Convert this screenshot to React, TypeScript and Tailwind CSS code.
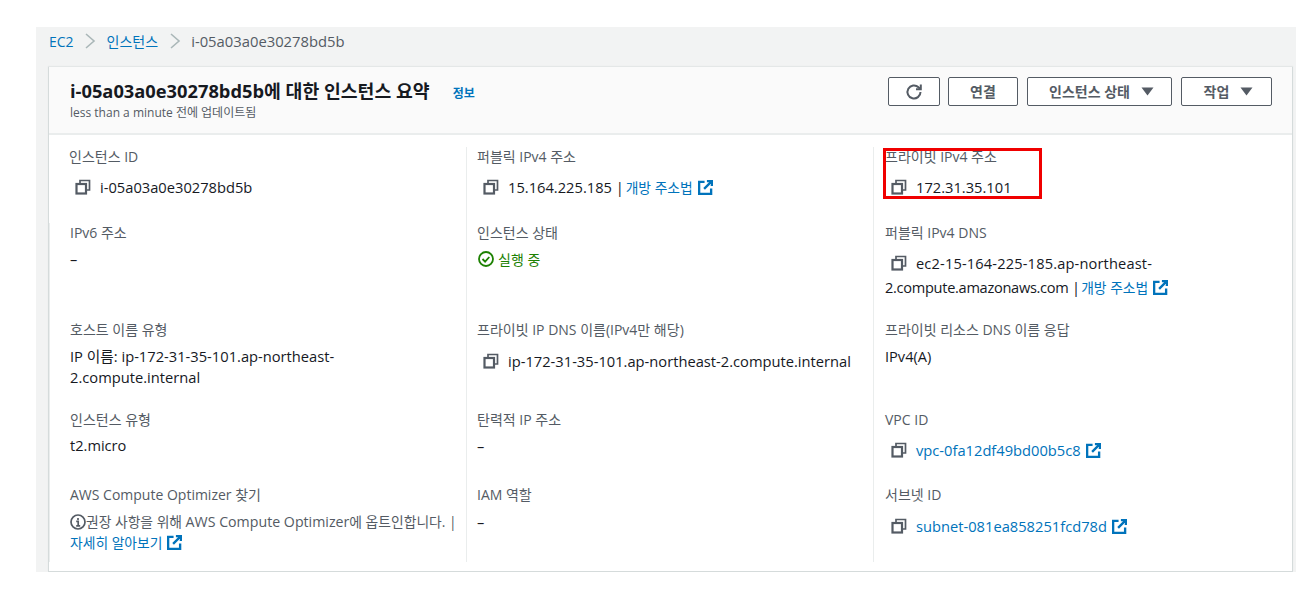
import React from "react";

const font = { fontFamily: '"Open Sans", "Noto Sans CJK KR", sans-serif' };

function Copy({ className = "" }: { className?: string }) {
  return (
    <svg width="16" height="16" viewBox="0 0 16 16" fill="none" stroke="#545b64" strokeWidth="2.2" className={`shrink-0 ${className}`}>
      <rect x="1.5" y="5" width="9.5" height="9.5" />
      <path d="M5 4.5V1.5h9.5V11h-3" strokeWidth="1.7" />
    </svg>
  );
}

function Ext() {
  return (
    <svg width="15" height="15" viewBox="0 0 16 16" fill="none" stroke="#0073bb" strokeWidth="2.5" className="inline-block ml-[5px] align-[-2px]">
      <path d="M7 2H1.2v12.8H14V9" />
      <path d="M9.5 1.2h5.3v5.3M14.5 1.5L6.5 9.5" />
    </svg>
  );
}

function Link({ children, ko = false }: { children: React.ReactNode; ko?: boolean }) {
  return <span className={`text-[#0073bb] ${ko ? "text-[13.8px] ml-[-2px]" : ""}`}>{children}<Ext /></span>;
}

function Cell({ label, children, pl }: { label: string; children: React.ReactNode; pl: string }) {
  return (
    <div className={`${pl} border-l border-[#eaeded] first:border-l-0`}>
      <div className="text-[14px] leading-[20px] text-[#545b64]">{label}</div>
      {children}
    </div>
  );
}

function Val({ children, mt = "mt-[10px]" }: { children: React.ReactNode; mt?: string }) {
  return <div className={`flex items-center gap-[9px] ${mt} h-[20px] text-[14.7px] text-[#16191f] whitespace-nowrap pl-[6px]`}>{children}</div>;
}

function Btn({ children, w }: { children: React.ReactNode; w: string }) {
  return (
    <button className={`${w} h-[29px] flex items-center justify-center gap-[11px] border border-[#545b64] rounded-[2px] bg-white text-[14px] font-semibold text-[#545b64]`}>
      {children}
    </button>
  );
}

function Caret() {
  return (
    <svg width="13" height="9" viewBox="0 0 13 9" fill="#545b64"><path d="M0.5 0.5h12L6.5 8.5z" /></svg>
  );
}

function Chevron() {
  return (
    <svg width="12" height="18" viewBox="0 0 12 18" fill="none" stroke="#aab7b8" strokeWidth="1.6" className="mx-[10.5px]"><path d="M2 2l8 7-8 7" /></svg>
  );
}

export default function App() {
  return (
    <div className="w-[1302px] h-[593px] bg-white pl-[36px] pr-[6px] pt-[27px] overflow-hidden" style={font}>
      <div className="h-[545px] bg-[#f2f3f3]">
        <div className="h-[28px] mb-[12px] pl-[13px] flex items-center text-[14px] text-[#545b64]">
          <span className="text-[#0073bb]">EC2</span>
          <Chevron />
          <span className="text-[#0073bb]">인스턴스</span>
          <Chevron />
          <span className="text-[14.8px]">i-05a03a0e30278bd5b</span>
        </div>
        <div className="ml-[12px] mr-[3px] h-[505px] bg-white border-l border-[#d5dbdb] border-r border-b shadow-[0_-1px_1px_#e4e7e7]">
          <div className="h-[68px] bg-[#fafafa] border-b-2 border-[#eaeded] pl-[21px] pr-[20px] flex justify-between">
            <div className="pt-[11px]">
              <div className="flex items-baseline">
                <span className="text-[18.3px] leading-[26px] font-bold text-[#16191f]">i-05a03a0e30278bd5b에 대한 인스턴스 요약</span>
                <span className="ml-[23px] text-[12px] font-bold text-[#0073bb]">정보</span>
              </div>
              <div className="text-[12px] leading-[18px] text-[#545b64]">less than a minute 전에 업데이트됨</div>
            </div>
            <div className="pt-[10px] flex gap-[9px]">
              <Btn w="w-[52px] mr-[-1px]">
                <svg width="18" height="18" viewBox="0 0 18 18" fill="none" stroke="#545b64" strokeWidth="2">
                  <path d="M15.5 9a6.5 6.5 0 1 1-2-4.7L15.5 6" />
                  <path d="M15.8 1.5V6.3H11" />
                </svg>
              </Btn>
              <Btn w="w-[70px]">연결</Btn>
              <Btn w="w-[145px] pl-[4px]">인스턴스 상태<Caret /></Btn>
              <Btn w="w-[91px] pl-[4px]">작업<Caret /></Btn>
            </div>
          </div>
          <div className="grid grid-cols-[417px_407px_1fr] grid-rows-[76px_97px_90px_75px_77px] pt-[12px]">
            <Cell label="인스턴스 ID" pl="pl-[20px]">
              <Val><Copy /><span>i-05a03a0e30278bd5b</span></Val>
            </Cell>
            <Cell label="퍼블릭 IPv4 주소" pl="pl-[10px]">
              <Val><Copy /><span>15.164.225.185 | <Link ko>개방 주소법</Link></span></Val>
            </Cell>
            <Cell label="프라이빗 IPv4 주소" pl="pl-[11px]">
              <Val><Copy /><span>172.31.35.101</span></Val>
            </Cell>

            <Cell label="IPv6 주소" pl="pl-[20px]">
              <div className="mt-[6px] text-[14.6px] leading-[20px] text-[#16191f]">–</div>
            </Cell>
            <Cell label="인스턴스 상태" pl="pl-[10px]">
              <div className="mt-[6px] flex items-center gap-[4px] h-[20px] text-[14px] text-[#1d8102] pl-[1px]">
                <svg width="16" height="16" viewBox="0 0 16 16" fill="none" stroke="#1d8102" strokeWidth="1.8">
                  <circle cx="8" cy="8" r="7" />
                  <path d="M4.5 8l2.6 2.6 4.2-4.6" />
                </svg>
                <span>실행 중</span>
              </div>
            </Cell>
            <Cell label="퍼블릭 IPv4 DNS" pl="pl-[11px]">
              <div className="mt-[8px] text-[14.6px] leading-[24px] text-[#16191f] whitespace-nowrap">
                <div className="flex items-center pl-[6px] gap-[9px] tracking-[0.17px]"><Copy /><span>ec2-15-164-225-185.ap-northeast-</span></div>
                <div><span className="tracking-[-0.3px]">2.compute.amazonaws.com | </span><Link ko>개방 주소법</Link></div>
              </div>
            </Cell>

            <Cell label="호스트 이름 유형" pl="pl-[20px]">
              <div className="mt-[6px] text-[14.7px] leading-[21px] text-[#16191f] w-[290px]">IP 이름: ip-172-31-35-101.ap-northeast-2.compute.internal</div>
            </Cell>
            <Cell label="프라이빗 IP DNS 이름(IPv4만 해당)" pl="pl-[10px]">
              <Val mt="mt-[11px]"><Copy /><span>ip-172-31-35-101.ap-northeast-2.compute.internal</span></Val>
            </Cell>
            <Cell label="프라이빗 리소스 DNS 이름 응답" pl="pl-[11px]">
              <div className="mt-[6px] text-[14.6px] leading-[20px] text-[#16191f]">IPv4(A)</div>
            </Cell>

            <Cell label="인스턴스 유형" pl="pl-[20px]">
              <div className="mt-[5px] text-[14.6px] leading-[20px] text-[#16191f]">t2.micro</div>
            </Cell>
            <Cell label="탄력적 IP 주소" pl="pl-[10px]">
              <div className="mt-[6px] text-[14.6px] leading-[20px] text-[#16191f]">–</div>
            </Cell>
            <Cell label="VPC ID" pl="pl-[11px]">
              <Val><Copy /><Link>vpc-0fa12df49bd00b5c8</Link></Val>
            </Cell>

            <Cell label="AWS Compute Optimizer 찾기" pl="pl-[20px]">
              <div className="mt-[6px] text-[13.8px] leading-[21px] text-[#545b64] whitespace-nowrap">
                <svg width="16" height="16" viewBox="0 0 16 16" fill="none" stroke="#545b64" strokeWidth="1.7" className="inline-block align-[-3px]">
                  <circle cx="8" cy="8" r="7" />
                  <path d="M6.2 7.3H8.2V11.8M6.2 11.8h4M8 4v2" />
                </svg>
                권장 사항을 위해 <span className="text-[14.2px]">AWS Compute Optimizer</span>에 옵트인합니다. |
                <br />
                <Link>자세히 알아보기</Link>
              </div>
            </Cell>
            <Cell label="IAM 역할" pl="pl-[10px]">
              <div className="mt-[7px] text-[14.6px] leading-[20px] text-[#16191f]">–</div>
            </Cell>
            <Cell label="서브넷 ID" pl="pl-[11px]">
              <Val mt="mt-[11px]"><Copy /><Link>subnet-081ea858251fcd78d</Link></Val>
            </Cell>
          </div>
        </div>
      </div>
      <div className="absolute left-[883px] top-[148px] w-[159px] h-[51px] border-[3px] border-[#f00000]" />
    </div>
  );
}
